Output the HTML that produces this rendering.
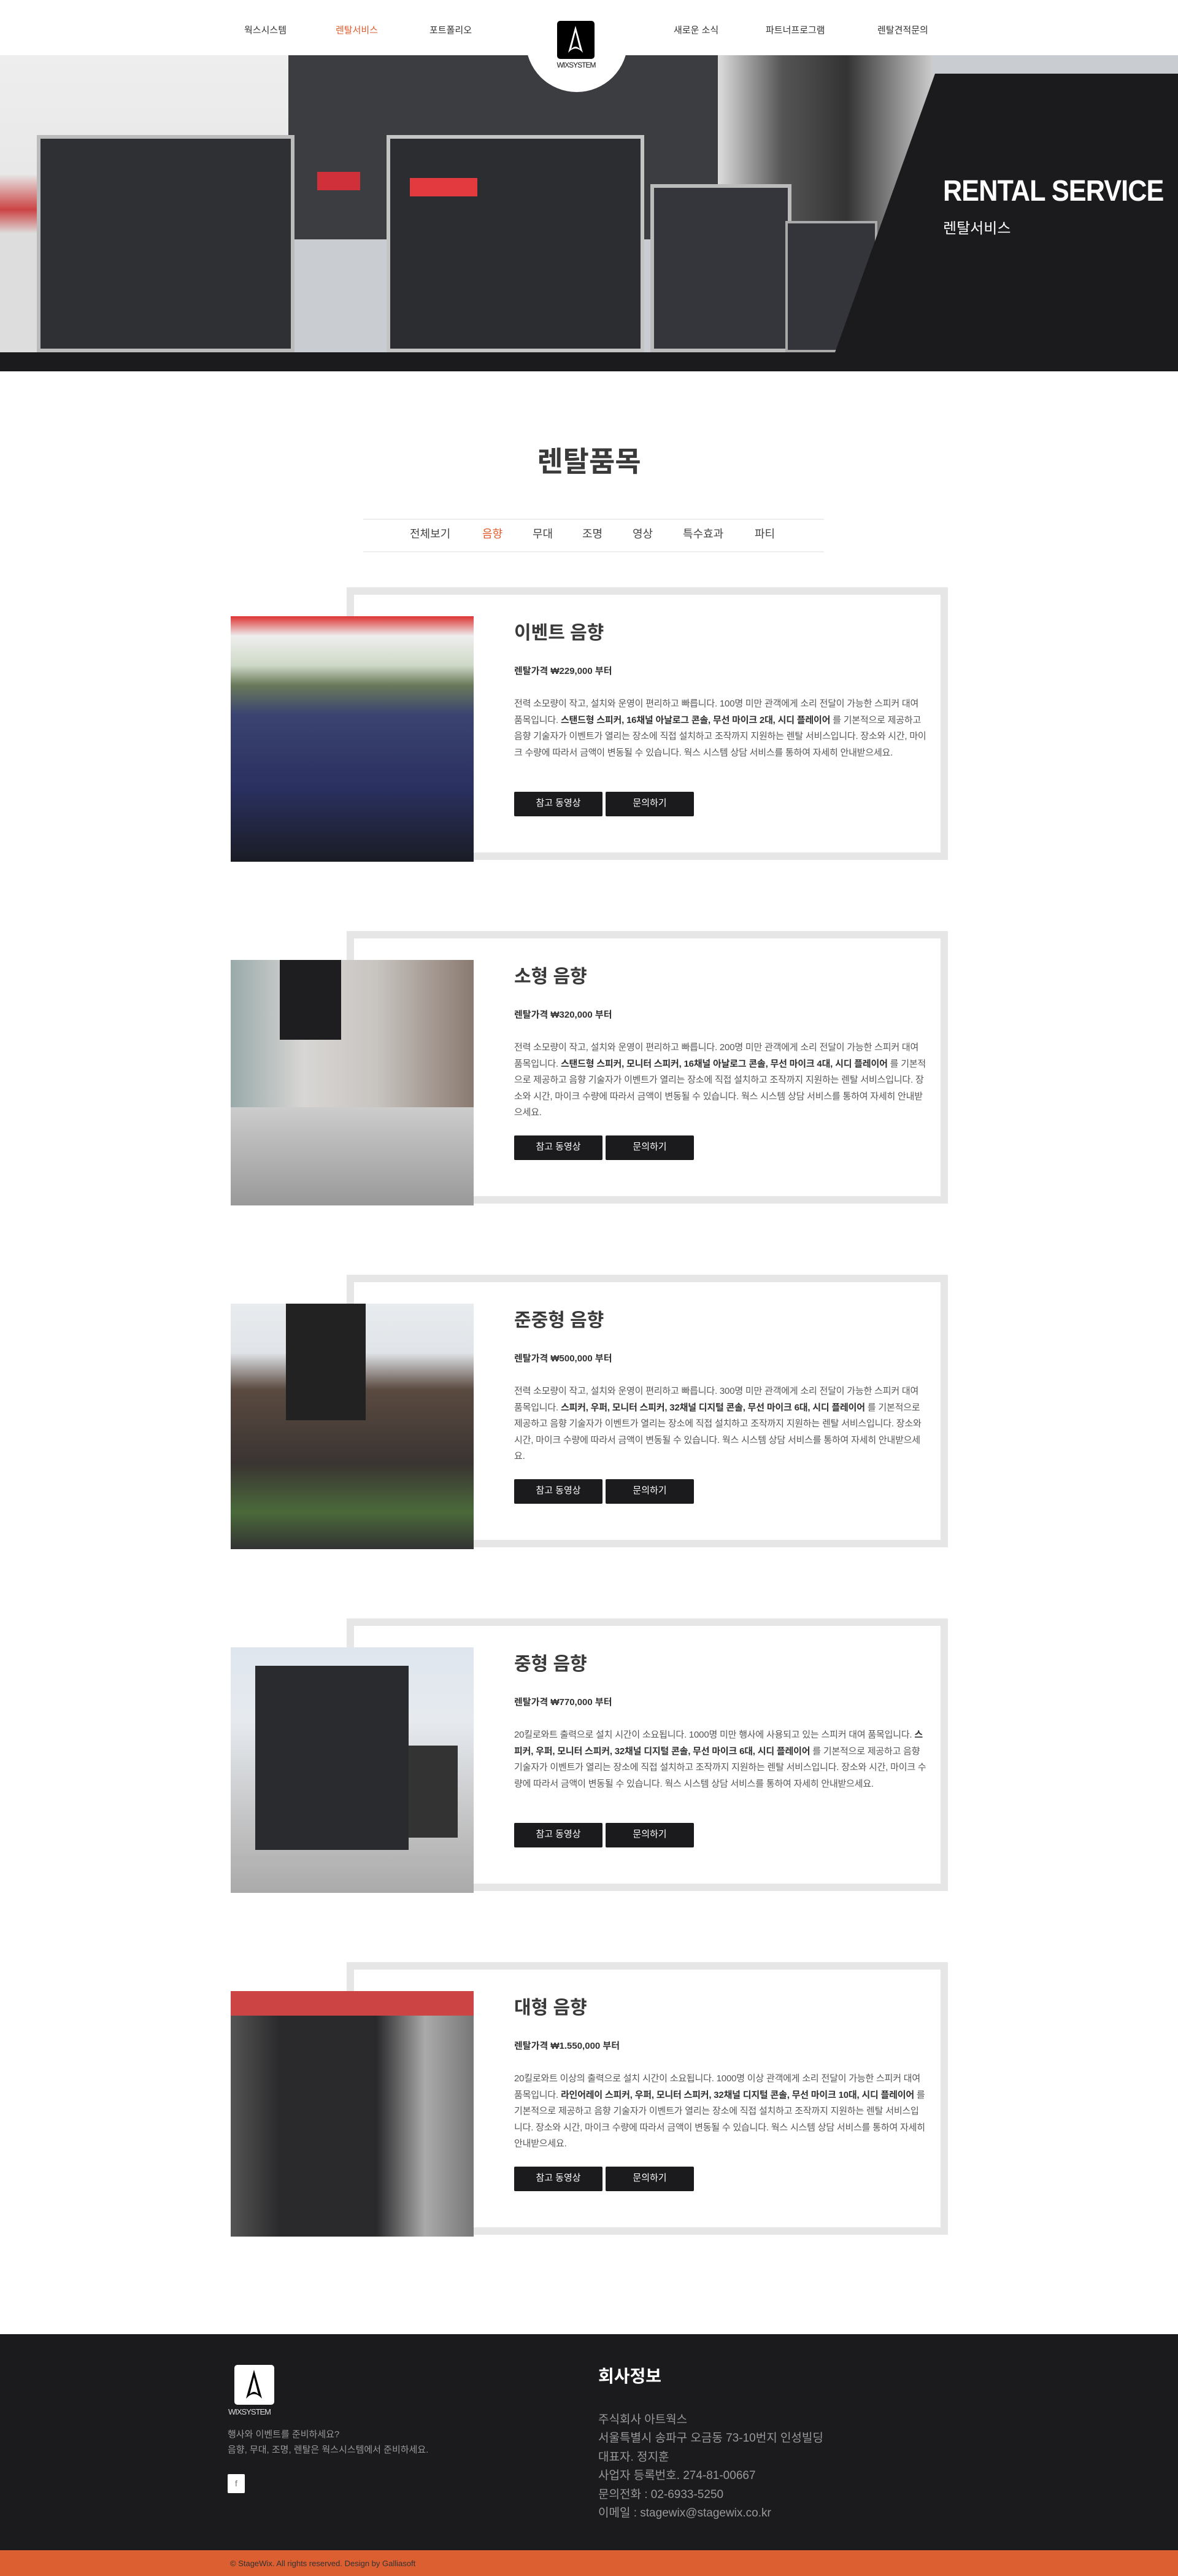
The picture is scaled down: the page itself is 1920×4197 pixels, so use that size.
<!DOCTYPE html>
<html><head><meta charset="utf-8">
<style>
*{margin:0;padding:0;box-sizing:border-box}
body{width:1920px;height:4197px;position:relative;background:#fff;font-family:"Liberation Sans","Noto Sans CJK KR",sans-serif;color:#444;overflow:hidden}
.abs{position:absolute}
.nav{top:38px;font-size:15px;color:#333}
.hero{top:90px;left:0;width:1920px;height:484px;overflow:hidden;background:#c9ccd0}
.card{position:absolute;left:565px;width:980px;height:444px;border:12px solid #e6e6e6;background:#fff}
.img{position:absolute;left:376px;width:396px;height:400px}
.ttl{position:absolute;left:838px;font-size:30px;font-weight:bold;color:#3a3a3a}
.price{position:absolute;left:838px;font-size:15px;font-weight:bold;color:#333}
.desc{position:absolute;left:838px;width:672px;font-size:15px;line-height:26.5px;color:#555;letter-spacing:-0.2px}
.desc b{color:#333}
.btn{position:absolute;width:144px;height:40px;background:#1b1b1e;color:#fff;font-size:15px;text-align:center;line-height:38px;border-radius:2px}
.ftxt{color:#999;font-size:19px}
</style></head><body>
<div class="abs nav" style="left:398px">웍스시스템</div>
<div class="abs nav" style="left:547px;color:#e05a2b">렌탈서비스</div>
<div class="abs nav" style="left:700px">포트폴리오</div>
<div class="abs nav" style="left:1098px">새로운 소식</div>
<div class="abs nav" style="left:1248px">파트너프로그램</div>
<div class="abs nav" style="left:1430px">렌탈견적문의</div>

<div class="abs hero">
  <div class="abs" style="left:0;top:0;width:470px;height:484px;background:linear-gradient(#eee 0,#e8e8e8 40%,#c44 52%,#ddd 60%)"></div>
  <div class="abs" style="left:470px;top:0;width:700px;height:300px;background:#3c3d40"></div>
  <div class="abs" style="left:1170px;top:0;width:350px;height:484px;background:linear-gradient(90deg,#ddd,#555 30%,#333 60%,#ccc)"></div>
  <div class="abs" style="left:60px;top:130px;width:420px;height:354px;background:#2f3034;border:6px solid #bbb"></div>
  <div class="abs" style="left:630px;top:130px;width:420px;height:354px;background:#2c2d31;border:6px solid #c4c4c4"></div>
  <div class="abs" style="left:1060px;top:210px;width:230px;height:274px;background:#34363b;border:6px solid #bbb"></div>
  <div class="abs" style="left:1280px;top:270px;width:150px;height:214px;background:#33353a;border:4px solid #aaa"></div>
  <div class="abs" style="left:517px;top:190px;width:70px;height:30px;background:#d0303a"></div>
  <div class="abs" style="left:668px;top:200px;width:110px;height:30px;background:#e23a3e"></div>
  <svg class="abs" style="left:0;top:0" width="1920" height="484"><polygon points="1524,30 1920,30 1920,484 1361,484" fill="#1b1b1e"/></svg>
</div>
<div class="abs" style="left:0;top:574px;width:1920px;height:31px;background:#1b1b1e"></div>
<div class="abs" style="left:1537px;top:284px;font-size:48px;font-weight:bold;color:#fff;white-space:nowrap;transform:scaleX(0.9);transform-origin:0 0;letter-spacing:-1px">RENTAL SERVICE</div>
<div class="abs" style="left:1537px;top:352px;font-size:24px;color:#fff">렌탈서비스</div>

<div class="abs" style="left:857px;top:60px;width:166px;height:90px;background:#fff;border-radius:0 0 83px 83px"></div>
<div class="abs" style="left:908px;top:34px;width:61px;height:62px;background:#000;border-radius:5px"></div>
<svg class="abs" style="left:908px;top:34px" width="61" height="62"><path d="M30 8 L18 52 Q30 38 42 52 Z" fill="#fff"/><path d="M30 18 L23 46 Q30 38 37 46 Z" fill="#000"/></svg>
<div class="abs" style="left:902px;top:99px;width:74px;text-align:center;font-size:12px;color:#111;letter-spacing:-1px">WIXSYSTEM</div>

<div class="abs" style="left:0;top:716px;width:1920px;text-align:center;font-size:46px;font-weight:bold;color:#3a3a3a">렌탈품목</div>
<div class="abs" style="left:592px;top:845px;width:751px;height:55px;border-top:2px solid #eee;border-bottom:2px solid #eee"></div>
<div class="abs" style="top:856px;font-size:18px;color:#444;left:668px">전체보기</div>
<div class="abs" style="top:856px;font-size:18px;color:#e05a2b;left:786px">음향</div>
<div class="abs" style="top:856px;font-size:18px;color:#444;left:868px">무대</div>
<div class="abs" style="top:856px;font-size:18px;color:#444;left:949px">조명</div>
<div class="abs" style="top:856px;font-size:18px;color:#444;left:1031px">영상</div>
<div class="abs" style="top:856px;font-size:18px;color:#444;left:1113px">특수효과</div>
<div class="abs" style="top:856px;font-size:18px;color:#444;left:1230px">파티</div>

<!-- card 1 -->
<div class="card" style="top:957px"></div>
<div class="img" style="top:1004px;background:linear-gradient(#d33 0,#eee 8%,#cfd9c8 20%,#6a7a5a 28%,#3b4470 40%,#2a3060 70%,#1a1c24 100%)"></div>
<div class="ttl" style="top:1006px">이벤트 음향</div>
<div class="price" style="top:1082px">렌탈가격 ₩229,000 부터</div>
<div class="desc" style="top:1134px">전력 소모량이 작고, 설치와 운영이 편리하고 빠릅니다. 100명 미만 관객에게 소리 전달이 가능한 스피커 대여 품목입니다. <b>스탠드형 스피커, 16채널 아날로그 콘솔, 무선 마이크 2대, 시디 플레이어</b> 를 기본적으로 제공하고 음향 기술자가 이벤트가 열리는 장소에 직접 설치하고 조작까지 지원하는 렌탈 서비스입니다. 장소와 시간, 마이크 수량에 따라서 금액이 변동될 수 있습니다. 웍스 시스템 상담 서비스를 통하여 자세히 안내받으세요.</div>
<div class="btn" style="left:838px;top:1290px">참고 동영상</div>
<div class="btn" style="left:987px;top:1290px">문의하기</div>

<!-- card 2 -->
<div class="card" style="top:1517px"></div>
<div class="img" style="top:1564px;background:linear-gradient(90deg,#9aa 0,#d8d6d4 30%,#c8c4c0 60%,#8a7a70 100%)"><div class="abs" style="left:80px;top:0;width:100px;height:130px;background:#1e1e20"></div><div class="abs" style="left:0;top:240px;width:396px;height:160px;background:linear-gradient(#ccc,#999)"></div></div>
<div class="ttl" style="top:1566px">소형 음향</div>
<div class="price" style="top:1642px">렌탈가격 ₩320,000 부터</div>
<div class="desc" style="top:1694px">전력 소모량이 작고, 설치와 운영이 편리하고 빠릅니다. 200명 미만 관객에게 소리 전달이 가능한 스피커 대여 품목입니다. <b>스탠드형 스피커, 모니터 스피커, 16채널 아날로그 콘솔, 무선 마이크 4대, 시디 플레이어</b> 를 기본적으로 제공하고 음향 기술자가 이벤트가 열리는 장소에 직접 설치하고 조작까지 지원하는 렌탈 서비스입니다. 장소와 시간, 마이크 수량에 따라서 금액이 변동될 수 있습니다. 웍스 시스템 상담 서비스를 통하여 자세히 안내받으세요.</div>
<div class="btn" style="left:838px;top:1850px">참고 동영상</div>
<div class="btn" style="left:987px;top:1850px">문의하기</div>

<!-- card 3 -->
<div class="card" style="top:2077px"></div>
<div class="img" style="top:2124px;background:linear-gradient(#e8ecef 0,#e0e4e8 20%,#5a4a40 35%,#3a3432 65%,#4a6a3a 85%,#333 100%)"><div class="abs" style="left:90px;top:0;width:130px;height:190px;background:#222"></div></div>
<div class="ttl" style="top:2126px">준중형 음향</div>
<div class="price" style="top:2202px">렌탈가격 ₩500,000 부터</div>
<div class="desc" style="top:2254px">전력 소모량이 작고, 설치와 운영이 편리하고 빠릅니다. 300명 미만 관객에게 소리 전달이 가능한 스피커 대여 품목입니다. <b>스피커, 우퍼, 모니터 스피커, 32채널 디지털 콘솔, 무선 마이크 6대, 시디 플레이어</b> 를 기본적으로 제공하고 음향 기술자가 이벤트가 열리는 장소에 직접 설치하고 조작까지 지원하는 렌탈 서비스입니다. 장소와 시간, 마이크 수량에 따라서 금액이 변동될 수 있습니다. 웍스 시스템 상담 서비스를 통하여 자세히 안내받으세요.</div>
<div class="btn" style="left:838px;top:2410px">참고 동영상</div>
<div class="btn" style="left:987px;top:2410px">문의하기</div>

<!-- card 4 -->
<div class="card" style="top:2637px"></div>
<div class="img" style="top:2684px;background:linear-gradient(#dfe6ee 0,#e6eaef 30%,#bbb 80%,#aaa 100%)"><div class="abs" style="left:40px;top:30px;width:250px;height:300px;background:#2a2b2e"></div><div class="abs" style="left:290px;top:160px;width:80px;height:150px;background:#333"></div></div>
<div class="ttl" style="top:2686px">중형 음향</div>
<div class="price" style="top:2762px">렌탈가격 ₩770,000 부터</div>
<div class="desc" style="top:2814px">20킬로와트 출력으로 설치 시간이 소요됩니다. 1000명 미만 행사에 사용되고 있는 스피커 대여 품목입니다. <b>스피커, 우퍼, 모니터 스피커, 32채널 디지털 콘솔, 무선 마이크 6대, 시디 플레이어</b> 를 기본적으로 제공하고 음향 기술자가 이벤트가 열리는 장소에 직접 설치하고 조작까지 지원하는 렌탈 서비스입니다. 장소와 시간, 마이크 수량에 따라서 금액이 변동될 수 있습니다. 웍스 시스템 상담 서비스를 통하여 자세히 안내받으세요.</div>
<div class="btn" style="left:838px;top:2970px">참고 동영상</div>
<div class="btn" style="left:987px;top:2970px">문의하기</div>

<!-- card 5 -->
<div class="card" style="top:3197px"></div>
<div class="img" style="top:3244px;background:linear-gradient(90deg,#555 0,#2a2a2c 20%,#2a2a2c 60%,#aaa 80%,#777 100%)"><div class="abs" style="left:0;top:0;width:396px;height:40px;background:#c44"></div></div>
<div class="ttl" style="top:3246px">대형 음향</div>
<div class="price" style="top:3322px">렌탈가격 ₩1.550,000 부터</div>
<div class="desc" style="top:3374px">20킬로와트 이상의 출력으로 설치 시간이 소요됩니다. 1000명 이상 관객에게 소리 전달이 가능한 스피커 대여 품목입니다. <b>라인어레이 스피커, 우퍼, 모니터 스피커, 32채널 디지털 콘솔, 무선 마이크 10대, 시디 플레이어</b> 를 기본적으로 제공하고 음향 기술자가 이벤트가 열리는 장소에 직접 설치하고 조작까지 지원하는 렌탈 서비스입니다. 장소와 시간, 마이크 수량에 따라서 금액이 변동될 수 있습니다. 웍스 시스템 상담 서비스를 통하여 자세히 안내받으세요.</div>
<div class="btn" style="left:838px;top:3530px">참고 동영상</div>
<div class="btn" style="left:987px;top:3530px">문의하기</div>

<!-- footer -->
<div class="abs" style="left:0;top:3803px;width:1920px;height:352px;background:#1b1b1e"></div>
<div class="abs" style="left:382px;top:3853px;width:65px;height:65px;background:#fff;border-radius:5px"></div>
<svg class="abs" style="left:382px;top:3853px" width="65" height="65"><path d="M32 8 L19 55 Q32 40 45 55 Z" fill="#000"/><path d="M32 20 L25 48 Q32 40 39 48 Z" fill="#fff"/></svg>
<div class="abs" style="left:372px;top:3922px;font-size:13px;color:#ddd;letter-spacing:-1px">WIXSYSTEM</div>
<div class="abs" style="left:371px;top:3954px;font-size:15px;color:#999;line-height:25px">행사와 이벤트를 준비하세요?<br>음향, 무대, 조명, 렌탈은 웍스시스템에서 준비하세요.</div>
<div class="abs" style="left:371px;top:4031px;width:28px;height:31px;background:#fff;border-radius:2px;color:#777;font-size:14px;text-align:center;line-height:31px">f</div>
<div class="abs" style="left:975px;top:3850px;font-size:28px;font-weight:bold;color:#fff">회사정보</div>
<div class="abs ftxt" style="left:975px;top:3928px;line-height:30.4px">주식회사 아트웍스<br>서울특별시 송파구 오금동 73-10번지 인성빌딩<br>대표자. 정지훈<br>사업자 등록번호. 274-81-00667<br>문의전화 : 02-6933-5250<br>이메일 : stagewix@stagewix.co.kr</div>
<div class="abs" style="left:0;top:4155px;width:1920px;height:42px;background:#dc5f31"></div>
<div class="abs" style="left:375px;top:4169px;font-size:13px;color:#333">© StageWix. All rights reserved. Design by Galliasoft</div>
</body></html>
